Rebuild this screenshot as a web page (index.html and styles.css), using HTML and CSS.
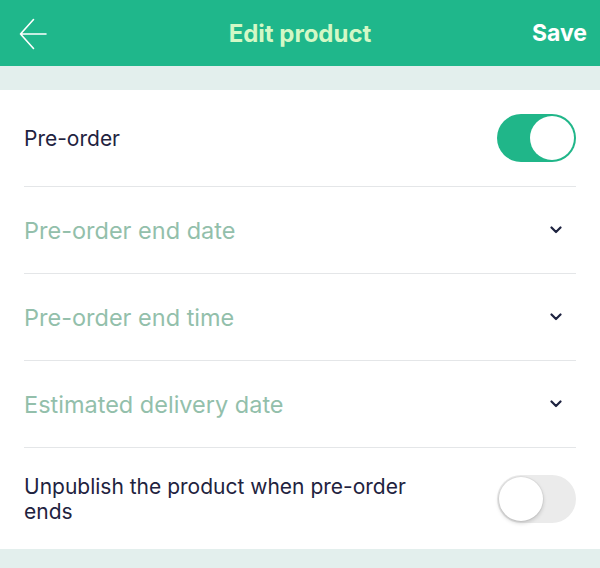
FILE: index.html
```html
<!DOCTYPE html>
<html lang="en">

<head>
    <meta charset="UTF-8">
    <meta name="viewport" content="width=device-width, initial-scale=1.0">
    <title>Edit product</title>
    <link rel="stylesheet" href="styles.css">
</head>

<body>

    <!-- Top bar -->
    <header class="topbar">
        <button class="back-btn" aria-label="Back">
            <svg width="28" height="32" viewBox="0 0 28 32" fill="none" stroke="#ffffff" stroke-width="1.6" stroke-linecap="round" stroke-linejoin="round">
                <path d="M27 16H1.5M14.5 1.5L1.5 16L14.5 30.5"/>
            </svg>
        </button>
        <div class="topbar-title">Edit product</div>
        <button class="save-btn">Save</button>
    </header>

    <div class="spacer"></div>

    <!-- Settings list -->
    <section class="settings">
        <div class="row row-first">
            <span class="label">Pre-order</span>
            <span class="toggle toggle-on"><span class="knob"></span></span>
        </div>

        <div class="row">
            <span class="placeholder">Pre-order end date</span>
            <svg class="chevron" width="12" height="8" viewBox="0 0 12 8" fill="none" stroke="#1e2340" stroke-width="2.2" stroke-linecap="round" stroke-linejoin="round">
                <path d="M1.5 1.5L6 6L10.5 1.5"/>
            </svg>
        </div>

        <div class="row">
            <span class="placeholder">Pre-order end time</span>
            <svg class="chevron" width="12" height="8" viewBox="0 0 12 8" fill="none" stroke="#1e2340" stroke-width="2.2" stroke-linecap="round" stroke-linejoin="round">
                <path d="M1.5 1.5L6 6L10.5 1.5"/>
            </svg>
        </div>

        <div class="row">
            <span class="placeholder">Estimated delivery date</span>
            <svg class="chevron" width="12" height="8" viewBox="0 0 12 8" fill="none" stroke="#1e2340" stroke-width="2.2" stroke-linecap="round" stroke-linejoin="round">
                <path d="M1.5 1.5L6 6L10.5 1.5"/>
            </svg>
        </div>

        <div class="row row-last">
            <span class="label label-wrap">Unpublish the product when pre-order ends</span>
            <span class="toggle toggle-off"><span class="knob"></span></span>
        </div>
    </section>

    <div class="spacer"></div>

</body>

</html>
```

FILE: styles.css
```css
/* General Styling */
body {
    font-family: Inter, "Noto Sans", sans-serif;
    background-color: #e3efed;
    margin: 0;
    color: #1f2340;
}

button {
    font-family: inherit;
    background: none;
    border: none;
    padding: 0;
    cursor: pointer;
}

/* Top bar */
.topbar {
    height: 66px;
    background-color: #1fb78b;
    display: flex;
    align-items: center;
    justify-content: space-between;
    padding: 0 13px 0 19px;
    position: relative;
}

.back-btn {
    display: flex;
    align-items: center;
    margin-top: 1px;
}

.topbar-title {
    position: absolute;
    left: 0;
    right: 0;
    text-align: center;
    font-size: 24px;
    font-weight: 700;
    color: #d3f8c6;
    pointer-events: none;
}

.save-btn {
    font-size: 23px;
    font-weight: 700;
    color: #ffffff;
    position: relative;
}

.spacer {
    height: 24px;
}

/* Settings list */
.settings {
    background-color: #ffffff;
    padding: 0 24px;
}

.row {
    height: 87px;
    display: flex;
    align-items: center;
    justify-content: space-between;
    border-bottom: 1px solid #e4e6e8;
    box-sizing: border-box;
}

.row-first {
    height: 97px;
}

.row-last {
    height: 101px;
    border-bottom: none;
}

.label {
    font-size: 21px;
    color: #1f2340;
}

.label-wrap {
    max-width: 420px;
    line-height: 25px;
}

.placeholder {
    font-size: 23.5px;
    color: #93bfab;
}

.chevron {
    margin-right: 14px;
}

/* Toggle switches */
.toggle {
    width: 79px;
    height: 48px;
    border-radius: 24px;
    display: flex;
    align-items: center;
    box-sizing: border-box;
}

.toggle .knob {
    width: 44px;
    height: 44px;
    border-radius: 50%;
    background-color: #ffffff;
    box-sizing: border-box;
}

.toggle-on {
    background-color: #20b689;
    justify-content: flex-end;
    padding: 0 2px;
}

.toggle-off {
    background-color: #ebebeb;
    justify-content: flex-start;
    padding: 0 2px;
}

.toggle-off .knob {
    box-shadow: 0 2px 4px rgba(0, 0, 0, 0.18), 0 0 0 1px rgba(0, 0, 0, 0.04);
}
```
